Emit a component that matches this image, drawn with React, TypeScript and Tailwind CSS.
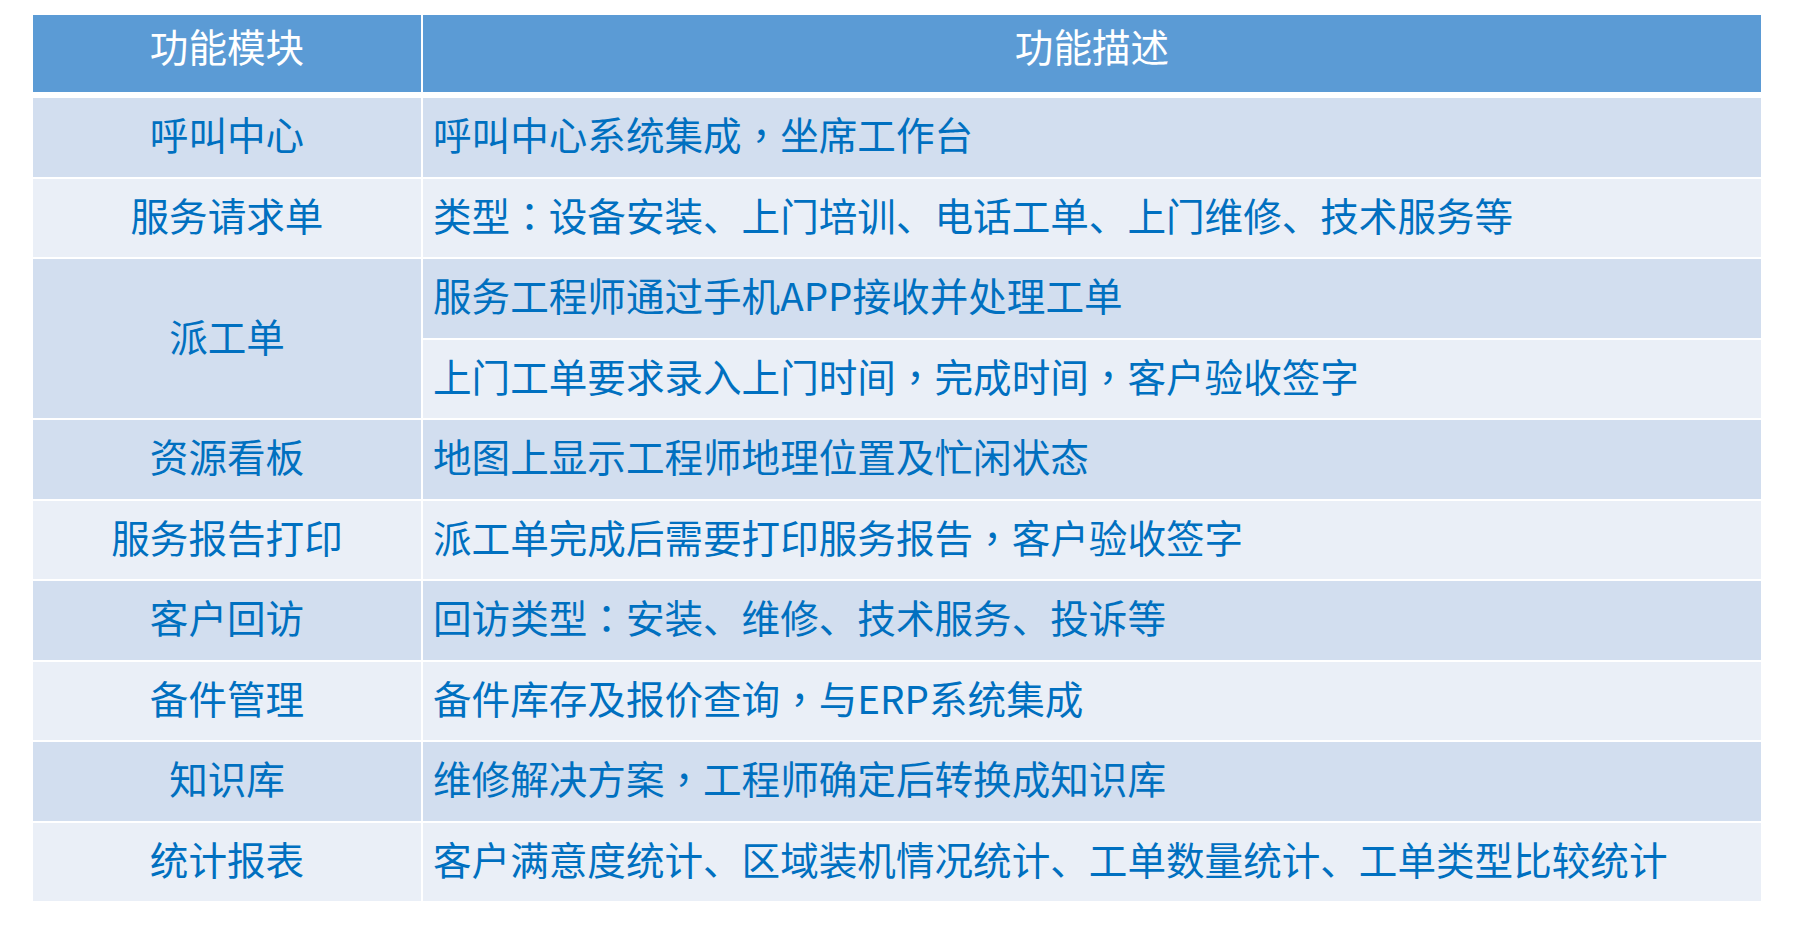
import React from 'react'

type Row = { module: string; desc: string[] }

const rows: Row[] = [
  { module: '呼叫中心', desc: ['呼叫中心系统集成，坐席工作台'] },
  { module: '服务请求单', desc: ['类型：设备安装、上门培训、电话工单、上门维修、技术服务等'] },
  { module: '派工单', desc: ['服务工程师通过手机APP接收并处理工单', '上门工单要求录入上门时间，完成时间，客户验收签字'] },
  { module: '资源看板', desc: ['地图上显示工程师地理位置及忙闲状态'] },
  { module: '服务报告打印', desc: ['派工单完成后需要打印服务报告，客户验收签字'] },
  { module: '客户回访', desc: ['回访类型：安装、维修、技术服务、投诉等'] },
  { module: '备件管理', desc: ['备件库存及报价查询，与ERP系统集成'] },
  { module: '知识库', desc: ['维修解决方案，工程师确定后转换成知识库'] },
  { module: '统计报表', desc: ['客户满意度统计、区域装机情况统计、工单数量统计、工单类型比较统计'] },
]

const dark = 'bg-[#d2deef]'
const light = 'bg-[#eaeff7]'

// full-width comma / colon sit centred in the original font
function Text({ value }: { value: string }) {
  const parts = value.split(/([，：])/)
  return (
    <>
      {parts.map((p, i) =>
        p === '，' || p === '：' ? (
          <span key={i} style={{ fontFamily: '"Noto Sans CJK TC", sans-serif' }}>
            {p}
          </span>
        ) : (
          <React.Fragment key={i}>{p}</React.Fragment>
        )
      )}
    </>
  )
}

export default function App() {
  // alternate shading follows the underlying table row index
  let idx = 0
  const cells: React.ReactNode[] = []
  rows.forEach((r) => {
    const span = r.desc.length
    const first = idx
    cells.push(
      <div
        key={r.module}
        className={`${first % 2 === 0 ? dark : light} flex items-center justify-center pb-[7px] ${span === 2 ? 'row-span-2' : ''}`}
        style={{ gridColumn: 1 }}
      >
        {r.module}
      </div>
    )
    r.desc.forEach((d, j) => {
      cells.push(
        <div
          key={r.module + j}
          className={`${(first + j) % 2 === 0 ? dark : light} flex items-center pl-[10px] pb-[7px] whitespace-nowrap`}
          style={{ gridColumn: 2 }}
        >
          <span>
            <Text value={d} />
          </span>
        </div>
      )
    })
    idx += span
  })

  return (
    <div
      className="min-h-screen bg-white pt-[15px] pl-[33px] text-[38.6px] leading-none text-[#0070c0]"
      style={{ fontFamily: '"Microsoft YaHei", "Noto Sans CJK SC", sans-serif' }}
    >
      <div className="w-[1728px]">
        {/* Header */}
        <div className="grid grid-cols-[388px_1338px] gap-x-[2px] h-[77px] text-white">
          <div className="bg-[#5b9bd5] flex items-center justify-center pb-[17px]">功能模块</div>
          <div className="bg-[#5b9bd5] flex items-center justify-center pb-[17px]">功能描述</div>
        </div>

        {/* Body */}
        <div className="mt-[6px] grid grid-cols-[388px_1338px] auto-rows-[78.5px] gap-x-[2px] gap-y-[2px]">
          {cells}
        </div>
      </div>
    </div>
  )
}
